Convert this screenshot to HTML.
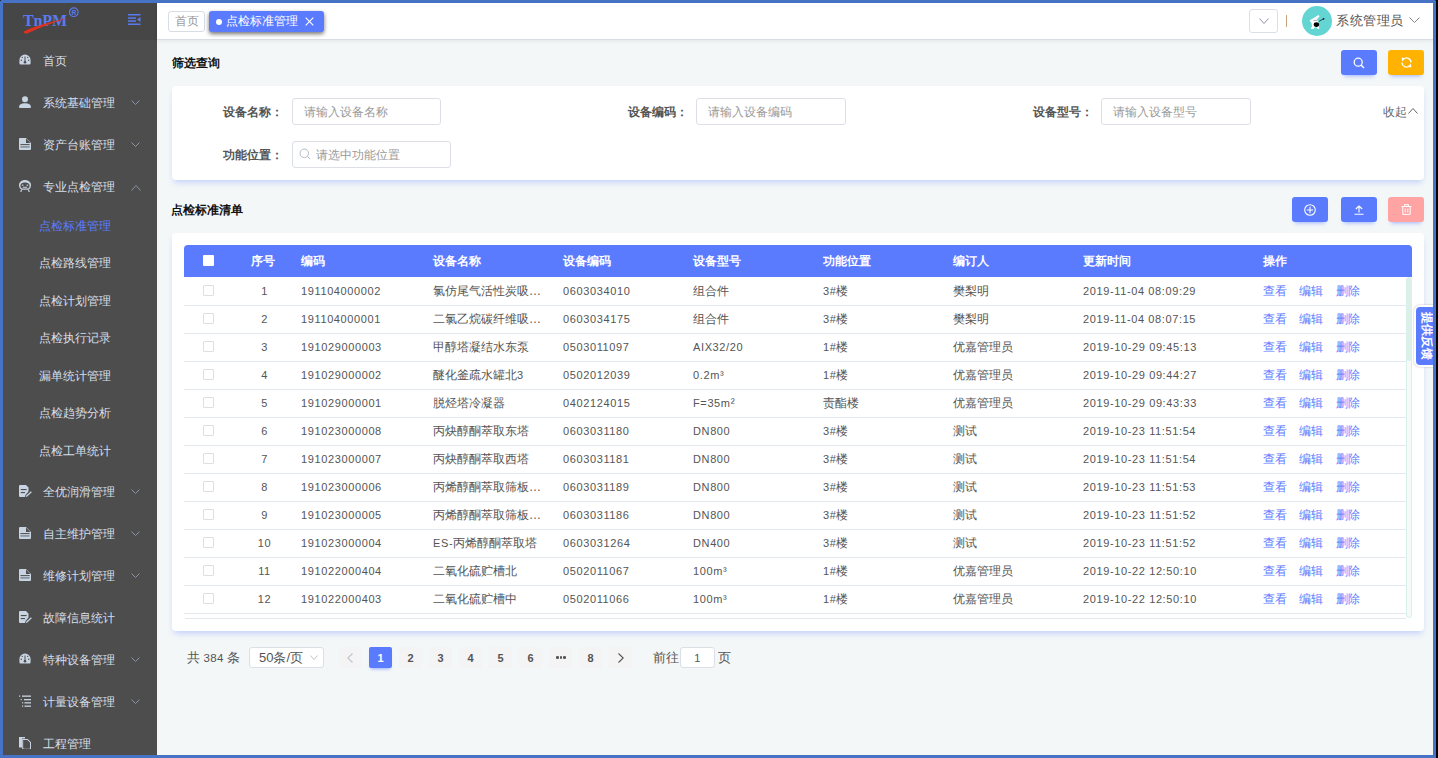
<!DOCTYPE html>
<html><head><meta charset="utf-8"><style>
*{box-sizing:border-box;margin:0;padding:0}
html,body{width:1438px;height:758px;overflow:hidden;background:#000}
body{position:relative;font-family:"Liberation Sans",sans-serif;font-size:12px;color:#606266}
.abs{position:absolute}
.mt{font-size:12px;line-height:20px;color:#d6dfea;white-space:nowrap}
.tag1{border:1px solid #d8dce5;border-radius:3px;background:#fff;color:#999;font-size:12px;line-height:19px;text-align:center}
.tag2{background:#5b7bff;border-radius:3px;color:#fff;font-size:12px;line-height:21px;box-shadow:0 2px 4px rgba(0,0,0,0.55)}
.tag2 .dot{position:absolute;left:7px;top:8px;width:6px;height:6px;border-radius:50%;background:#fff}
.tag2 .tt{position:absolute;left:17px;top:0}
.ttl{font-size:12px;font-weight:bold;color:#111;line-height:20px}
.btn{width:36px;height:25px;border-radius:3px;display:flex;align-items:center;justify-content:center;box-shadow:0 4px 4px -3px rgba(91,123,255,0.55)}
.card{background:#fff;border-radius:4px;box-shadow:0 4px 6px -2px rgba(91,123,255,0.34)}
.lbl{font-size:12px;font-weight:bold;color:#555;line-height:20px;white-space:nowrap}
.inp{border:1px solid #dcdfe6;border-radius:3px;background:#fff;color:#999;font-size:12px;line-height:27px;padding-left:11px;white-space:nowrap}
.th{color:#fff;font-weight:bold;font-size:12px;line-height:20px;white-space:nowrap}
.td{color:#555;font-size:12px;line-height:20px;white-space:nowrap}
.lk{color:#5b7bff}
.n{font-size:11px;letter-spacing:0.62px}
.cb{width:11px;height:11px;border:1px solid #dcdfe6;border-radius:1px;background:#fff}
.fb{background:#5b7bff;border:2px solid #fff;border-radius:6px;box-shadow:0 0 2px rgba(0,0,0,0.3)}
.fbt{position:absolute;left:-14px;top:22px;width:50px;height:14px;transform:rotate(90deg);color:#fff;font-weight:bold;font-size:12px;line-height:14px;white-space:nowrap;text-align:center}
.pg{color:#555;font-size:13px;line-height:21px;white-space:nowrap}
.pb{width:23px;height:21px;background:#f4f4f5;color:#555;font-weight:bold;font-size:11px;line-height:23px;text-align:center;border-radius:2px}
.pb.act{background:#5b7bff;color:#fff;box-shadow:0 3px 3px -2px rgba(91,123,255,0.6)}
</style></head><body>
<div class="abs" style="left:0;top:0;width:1436px;height:758px;background:#4673c6"></div>
<div class="abs" style="left:1436px;top:0;width:2px;height:758px;background:#000"></div>
<div class="abs" style="left:3px;top:3px;width:154px;height:752px;background:#4d4d4d"></div>
<div class="abs" style="left:3px;top:3px;width:154px;height:37px;background:#464646"></div>
<svg class="abs" style="left:20px;top:5px" width="64" height="30" viewBox="0 0 64 30">
<text x="3" y="21" font-family="Liberation Serif" font-weight="bold" font-size="16" fill="#5a7bf0" letter-spacing="-0.1">TnPM</text>
<path d="M4.2 26.3 C10 23.2 30 16.5 49.5 12.8 C31 18 16 24.5 7.5 28.3 C4.8 29.3 2.8 27.8 4.2 26.3Z" fill="#e0301e"/>
<circle cx="53.8" cy="7.2" r="4.3" fill="none" stroke="#5a7bf0" stroke-width="1.2"/>
<text x="53.8" y="9.6" font-family="Liberation Sans" font-weight="bold" font-size="6.5" fill="#5a7bf0" text-anchor="middle">R</text>
</svg>
<svg class="abs" style="left:128px;top:14px" width="13" height="11" viewBox="0 0 13 11">
<rect x="0" y="0" width="12.5" height="1.5" fill="#5a7bf0"/><rect x="0" y="3.3" width="8" height="1.5" fill="#5a7bf0"/>
<rect x="0" y="6.3" width="8" height="1.5" fill="#5a7bf0"/><rect x="0" y="9.5" width="12.5" height="1.5" fill="#5a7bf0"/>
<path d="M9 5.5 L12.5 3 L12.5 8Z" fill="#5a7bf0"/></svg>
<div class="abs mt" style="left:43px;top:50.5px">首页</div>
<svg class="abs" style="left:19px;top:54px" width="12" height="11" viewBox="0 0 12 11"><path d="M6 0.5 A5.6 5.6 0 0 0 0.4 6.1 L0.4 9.3 Q0.4 10.5 1.6 10.5 L10.4 10.5 Q11.6 10.5 11.6 9.3 L11.6 6.1 A5.6 5.6 0 0 0 6 0.5Z" fill="#c9d4e2"/><circle cx="6" cy="8.3" r="1.3" fill="#4d4d4d"/><path d="M6 8 L6 2.5" stroke="#4d4d4d" stroke-width="1"/><circle cx="2.3" cy="6.3" r="0.7" fill="#4d4d4d"/><circle cx="9.7" cy="6.3" r="0.7" fill="#4d4d4d"/><circle cx="3.3" cy="3.4" r="0.6" fill="#4d4d4d"/><circle cx="8.7" cy="3.4" r="0.6" fill="#4d4d4d"/></svg>
<div class="abs mt" style="left:43px;top:92.5px">系统基础管理</div>
<svg class="abs" style="left:19px;top:96px" width="12" height="12" viewBox="0 0 12 12"><circle cx="6" cy="3.2" r="3" fill="#c9d4e2"/><path d="M0 11 Q0 7.2 6 7.2 Q12 7.2 12 11 Q12 12 11 12 L1 12 Q0 12 0 11Z" fill="#c9d4e2"/></svg>
<svg class="abs" style="left:131px;top:100px" width="9" height="5" viewBox="0 0 9 5"><path d="M0.5 0.5 L4.5 4.5 L8.5 0.5" fill="none" stroke="#8a95a3" stroke-width="1"/></svg>
<div class="abs mt" style="left:43px;top:134.5px">资产台账管理</div>
<svg class="abs" style="left:19px;top:138px" width="12" height="12" viewBox="0 0 12 12"><path d="M1 0 L7 0 L12 5 L12 11 Q12 12 11 12 L1 12 Q0 12 0 11 L0 1 Q0 0 1 0Z" fill="#c9d4e2"/><path d="M7 0.6 L7 5 L11.4 5Z" fill="#4d4d4d"/><rect x="1.4" y="6.1" width="9.2" height="1" fill="#4d4d4d"/><rect x="1.4" y="8" width="9.2" height="1.8" fill="#8e96a0"/></svg>
<svg class="abs" style="left:131px;top:142px" width="9" height="5" viewBox="0 0 9 5"><path d="M0.5 0.5 L4.5 4.5 L8.5 0.5" fill="none" stroke="#8a95a3" stroke-width="1"/></svg>
<div class="abs mt" style="left:43px;top:176.5px">专业点检管理</div>
<svg class="abs" style="left:19px;top:180px" width="12" height="12" viewBox="0 0 12 12"><path d="M6 0 C9.4 0 12 2.2 12 5.2 C12 7.6 10.6 9.2 9 9.8 L3 9.8 C1.4 9.2 0 7.6 0 5.2 C0 2.2 2.6 0 6 0Z" fill="#c9d4e2"/><path d="M6 2.6 C8.6 2.6 10.6 3.8 10.6 5.8 C10.6 7.4 9.6 8.6 8.4 8.6 L3.6 8.6 C2.4 8.6 1.4 7.4 1.4 5.8 C1.4 3.8 3.4 2.6 6 2.6Z" fill="#4d4d4d"/><rect x="2.8" y="4.6" width="1.6" height="1.2" fill="#c9d4e2"/><rect x="7.6" y="4.6" width="1.6" height="1.2" fill="#c9d4e2"/><rect x="3.8" y="6.8" width="4.4" height="1" fill="#c9d4e2"/><path d="M2.6 9.6 L1.8 12 M9.4 9.6 L10.2 12" stroke="#c9d4e2" stroke-width="1.2"/></svg>
<svg class="abs" style="left:131px;top:185px" width="10" height="6" viewBox="0 0 10 6"><path d="M0.5 5.5 L5.0 0.5 L9.5 5.5" fill="none" stroke="#8a95a3" stroke-width="1"/></svg>
<div class="abs mt" style="left:39px;top:215.5px;color:#5b7cff">点检标准管理</div>
<div class="abs mt" style="left:39px;top:253.0px;color:#d6dfea">点检路线管理</div>
<div class="abs mt" style="left:39px;top:290.5px;color:#d6dfea">点检计划管理</div>
<div class="abs mt" style="left:39px;top:328.0px;color:#d6dfea">点检执行记录</div>
<div class="abs mt" style="left:39px;top:365.5px;color:#d6dfea">漏单统计管理</div>
<div class="abs mt" style="left:39px;top:403.0px;color:#d6dfea">点检趋势分析</div>
<div class="abs mt" style="left:39px;top:440.5px;color:#d6dfea">点检工单统计</div>
<div class="abs mt" style="left:43px;top:482px">全优润滑管理</div>
<svg class="abs" style="left:19px;top:485px" width="13" height="12" viewBox="0 0 13 12"><path d="M1 0 L7 0 L9.5 2.5 L9.5 6.5 L6.5 10 L6 12 L1 12 Q0 12 0 11 L0 1 Q0 0 1 0Z" fill="#c9d4e2"/><rect x="1.8" y="4" width="5.8" height="1.1" fill="#4d4d4d"/><rect x="1.8" y="7" width="4.2" height="1.1" fill="#4d4d4d"/><path d="M7.2 11.6 L12.4 6.8" stroke="#c9d4e2" stroke-width="1.3"/></svg>
<svg class="abs" style="left:131px;top:489px" width="9" height="5" viewBox="0 0 9 5"><path d="M0.5 0.5 L4.5 4.5 L8.5 0.5" fill="none" stroke="#8a95a3" stroke-width="1"/></svg>
<div class="abs mt" style="left:43px;top:524px">自主维护管理</div>
<svg class="abs" style="left:19px;top:527px" width="12" height="12" viewBox="0 0 12 12"><path d="M1 0 L7 0 L12 5 L12 11 Q12 12 11 12 L1 12 Q0 12 0 11 L0 1 Q0 0 1 0Z" fill="#c9d4e2"/><path d="M7 0.6 L7 5 L11.4 5Z" fill="#4d4d4d"/><rect x="1.4" y="6.1" width="9.2" height="1" fill="#4d4d4d"/><rect x="1.4" y="8" width="9.2" height="1.8" fill="#8e96a0"/></svg>
<svg class="abs" style="left:131px;top:531px" width="9" height="5" viewBox="0 0 9 5"><path d="M0.5 0.5 L4.5 4.5 L8.5 0.5" fill="none" stroke="#8a95a3" stroke-width="1"/></svg>
<div class="abs mt" style="left:43px;top:566px">维修计划管理</div>
<svg class="abs" style="left:19px;top:569px" width="12" height="12" viewBox="0 0 12 12"><path d="M1 0 L7 0 L12 5 L12 11 Q12 12 11 12 L1 12 Q0 12 0 11 L0 1 Q0 0 1 0Z" fill="#c9d4e2"/><path d="M7 0.6 L7 5 L11.4 5Z" fill="#4d4d4d"/><rect x="1.4" y="6.1" width="9.2" height="1" fill="#4d4d4d"/><rect x="1.4" y="8" width="9.2" height="1.8" fill="#8e96a0"/></svg>
<svg class="abs" style="left:131px;top:573px" width="9" height="5" viewBox="0 0 9 5"><path d="M0.5 0.5 L4.5 4.5 L8.5 0.5" fill="none" stroke="#8a95a3" stroke-width="1"/></svg>
<div class="abs mt" style="left:43px;top:608px">故障信息统计</div>
<svg class="abs" style="left:19px;top:611px" width="13" height="12" viewBox="0 0 13 12"><path d="M1 0 L7 0 L9.5 2.5 L9.5 6.5 L6.5 10 L6 12 L1 12 Q0 12 0 11 L0 1 Q0 0 1 0Z" fill="#c9d4e2"/><rect x="1.8" y="4" width="5.8" height="1.1" fill="#4d4d4d"/><rect x="1.8" y="7" width="4.2" height="1.1" fill="#4d4d4d"/><path d="M7.2 11.6 L12.4 6.8" stroke="#c9d4e2" stroke-width="1.3"/></svg>
<div class="abs mt" style="left:43px;top:650px">特种设备管理</div>
<svg class="abs" style="left:19px;top:653px" width="12" height="11" viewBox="0 0 12 11"><path d="M6 0.5 A5.6 5.6 0 0 0 0.4 6.1 L0.4 9.3 Q0.4 10.5 1.6 10.5 L10.4 10.5 Q11.6 10.5 11.6 9.3 L11.6 6.1 A5.6 5.6 0 0 0 6 0.5Z" fill="#c9d4e2"/><circle cx="6" cy="8.3" r="1.3" fill="#4d4d4d"/><path d="M6 8 L6 2.5" stroke="#4d4d4d" stroke-width="1"/><circle cx="2.3" cy="6.3" r="0.7" fill="#4d4d4d"/><circle cx="9.7" cy="6.3" r="0.7" fill="#4d4d4d"/><circle cx="3.3" cy="3.4" r="0.6" fill="#4d4d4d"/><circle cx="8.7" cy="3.4" r="0.6" fill="#4d4d4d"/></svg>
<svg class="abs" style="left:131px;top:657px" width="9" height="5" viewBox="0 0 9 5"><path d="M0.5 0.5 L4.5 4.5 L8.5 0.5" fill="none" stroke="#8a95a3" stroke-width="1"/></svg>
<div class="abs mt" style="left:43px;top:692px">计量设备管理</div>
<svg class="abs" style="left:19px;top:695px" width="12" height="12" viewBox="0 0 12 12"><rect x="0" y="0.5" width="1.2" height="1.2" fill="#c9d4e2"/><rect x="3" y="0.5" width="9" height="1.3" fill="#c9d4e2"/><rect x="1.6" y="4" width="1.2" height="1.2" fill="#c9d4e2"/><rect x="5" y="4" width="7" height="1.3" fill="#c9d4e2"/><rect x="3" y="7.2" width="1.2" height="1.2" fill="#c9d4e2"/><rect x="5.5" y="7.2" width="6.5" height="1.3" fill="#c9d4e2"/><rect x="3" y="10.5" width="1.2" height="1.2" fill="#c9d4e2"/><rect x="5.5" y="10.5" width="6.5" height="1.3" fill="#c9d4e2"/></svg>
<svg class="abs" style="left:131px;top:699px" width="9" height="5" viewBox="0 0 9 5"><path d="M0.5 0.5 L4.5 4.5 L8.5 0.5" fill="none" stroke="#8a95a3" stroke-width="1"/></svg>
<div class="abs mt" style="left:43px;top:734px">工程管理</div>
<svg class="abs" style="left:19px;top:737px" width="12" height="12" viewBox="0 0 12 12"><path d="M0 0 L6 0 L6 1.5 L3 1.5 L3 10.5 L0 10.5Z" fill="#c9d4e2"/><path d="M3.8 2.5 L8.5 2.5 L11.5 5.5 L11.5 12 L3.8 12Z" fill="none" stroke="#c9d4e2" stroke-width="1.2"/><path d="M4.4 3.1 L8.2 3.1 L10.9 5.8 L10.9 11.4 L4.4 11.4Z" fill="#4d4d4d"/></svg>
<div class="abs" style="left:157px;top:3px;width:1276px;height:752px;background:#f3f7f8"></div>
<div class="abs" style="left:157px;top:3px;width:1276px;height:37px;background:#fff;border-bottom:1px solid #d8dce5;box-shadow:0 1px 4px rgba(0,21,41,0.08)"></div>
<div class="abs tag1" style="left:168px;top:11px;width:37px;height:21px">首页</div>
<div class="abs tag2" style="left:209px;top:11px;width:115px;height:21px"><span class="dot"></span><span class="tt">点检标准管理</span>
<svg class="abs" style="left:96px;top:6px" width="9" height="9" viewBox="0 0 9 9"><path d="M0.7 0.7 L8.3 8.3 M8.3 0.7 L0.7 8.3" stroke="#fff" stroke-width="1.1"/></svg></div>
<div class="abs" style="left:1249px;top:9px;width:29px;height:24px;border:1px solid #dcdfe6;border-radius:3px;background:#fff"></div>
<svg class="abs" style="left:1259px;top:18px" width="10" height="6" viewBox="0 0 10 6"><path d="M0.5 0.5 L5.0 5.5 L9.5 0.5" fill="none" stroke="#8a95a3" stroke-width="1"/></svg>
<div class="abs" style="left:1286px;top:15px;width:1px;height:12px;background:#c8a27a"></div>
<svg class="abs" style="left:1302px;top:6px" width="30" height="30" viewBox="0 0 30 30"><circle cx="15" cy="15" r="15" fill="#63d6d3"/>
<path d="M7.5 14.5 L16.5 9 L17.5 10.5 L15 13 L16 15.5 L17 21 L17.3 23 L15.5 23 L15 21.5 L12.5 21.5 L11.5 23 L8.5 23 L10 20.5 L9.5 17 Z" fill="#fff"/>
<ellipse cx="14.4" cy="18.6" rx="2.7" ry="2.4" fill="#000"/><path d="M11.5 14.6 L15.5 14.2" stroke="#aaa" stroke-width="1"/><path d="M17 15.4 L21.8 12.6" stroke="#333" stroke-width="0.9"/><circle cx="21.6" cy="12.8" r="0.9" fill="#222"/></svg>
<div class="abs" style="left:1336px;top:10px;font-size:13px;letter-spacing:0.6px;line-height:21px;color:#555">系统管理员</div>
<svg class="abs" style="left:1409px;top:17px" width="11" height="6" viewBox="0 0 11 6"><path d="M0.5 0.5 L5.5 5.5 L10.5 0.5" fill="none" stroke="#888" stroke-width="1"/></svg>
<div class="abs ttl" style="left:172px;top:53px">筛选查询</div>
<div class="abs btn" style="left:1341px;top:50px;background:#5b7bff"><svg width="12" height="12" viewBox="0 0 12 12"><circle cx="5.2" cy="5.2" r="4" fill="none" stroke="#fff" stroke-width="1.3"/><path d="M8 8 L11 11" stroke="#fff" stroke-width="1.4"/></svg></div>
<div class="abs btn" style="left:1388px;top:50px;background:#ffb300"><svg width="11" height="11" viewBox="0 0 11 11"><path d="M10 5.6 A4.5 4.5 0 0 0 2.3 2.3" fill="none" stroke="#fff" stroke-width="1.2"/><path d="M0.6 0.6 L4.2 1.2 L1.2 4.4Z" fill="#fff"/><path d="M1 5.4 A4.5 4.5 0 0 0 8.7 8.7" fill="none" stroke="#fff" stroke-width="1.2"/><path d="M10.4 10.4 L6.8 9.8 L9.8 6.6Z" fill="#fff"/></svg></div>
<div class="abs card" style="left:172px;top:86px;width:1252px;height:94px"></div>
<div class="abs lbl" style="left:223px;top:102px">设备名称：</div>
<div class="abs inp" style="left:292px;top:98px;width:149px;height:27px">请输入设备名称</div>
<div class="abs lbl" style="left:628px;top:102px">设备编码：</div>
<div class="abs inp" style="left:696px;top:98px;width:150px;height:27px">请输入设备编码</div>
<div class="abs lbl" style="left:1033px;top:102px">设备型号：</div>
<div class="abs inp" style="left:1101px;top:98px;width:150px;height:27px">请输入设备型号</div>
<div class="abs" style="left:1383px;top:102px;line-height:20px;color:#666">收起</div>
<svg class="abs" style="left:1408px;top:108px" width="10" height="6" viewBox="0 0 10 6"><path d="M0.5 5.5 L5.0 0.5 L9.5 5.5" fill="none" stroke="#666" stroke-width="1"/></svg>
<div class="abs lbl" style="left:223px;top:145px">功能位置：</div>
<div class="abs inp" style="left:292px;top:141px;width:159px;height:27px;padding-left:23px">请选中功能位置</div>
<svg class="abs" style="left:299px;top:148px" width="12" height="12" viewBox="0 0 12 12"><circle cx="5.3" cy="5.3" r="4.3" fill="none" stroke="#b8bcc4" stroke-width="1"/><path d="M8.4 8.4 L11 11" stroke="#b8bcc4" stroke-width="1"/></svg>
<div class="abs ttl" style="left:171px;top:200px">点检标准清单</div>
<div class="abs btn" style="left:1292px;top:197px;background:#5b7bff"><svg width="12" height="12" viewBox="0 0 12 12"><circle cx="6" cy="6" r="5.3" fill="none" stroke="#fff" stroke-width="1.1"/><path d="M6 2.8 L6 9.2 M2.8 6 L9.2 6" stroke="#fff" stroke-width="1.1"/></svg></div>
<div class="abs btn" style="left:1341px;top:197px;background:#5b7bff"><svg width="10" height="10" viewBox="0 0 10 10"><path d="M5 1 L5 7.5 M1.8 4 L5 1 L8.2 4 M0.5 9.2 L9.5 9.2" fill="none" stroke="#fff" stroke-width="1.1"/></svg></div>
<div class="abs btn" style="left:1388px;top:197px;background:#ffa3a3"><svg width="11" height="11" viewBox="0 0 11 11"><path d="M0.5 2.5 L10.5 2.5 M3.5 2.5 L3.5 0.7 L7.5 0.7 L7.5 2.5 M1.8 2.5 L1.8 10.4 L9.2 10.4 L9.2 2.5 M4.2 4.5 L4.2 8.5 M6.8 4.5 L6.8 8.5" fill="none" stroke="#fff" stroke-width="1"/></svg></div>
<div class="abs card" style="left:172px;top:233px;width:1252px;height:398px"></div>
<div class="abs" style="left:184px;top:245px;width:1228px;height:32px;background:#5b7bff;border-radius:4px 4px 0 0"></div>
<div class="abs" style="left:203px;top:255px;width:11px;height:11px;background:#fff;border-radius:1px"></div>
<div class="abs th" style="left:251px;top:251px">序号</div>
<div class="abs th" style="left:301px;top:251px">编码</div>
<div class="abs th" style="left:433px;top:251px">设备名称</div>
<div class="abs th" style="left:563px;top:251px">设备编码</div>
<div class="abs th" style="left:693px;top:251px">设备型号</div>
<div class="abs th" style="left:823px;top:251px">功能位置</div>
<div class="abs th" style="left:953px;top:251px">编订人</div>
<div class="abs th" style="left:1083px;top:251px">更新时间</div>
<div class="abs th" style="left:1263px;top:251px">操作</div>
<div class="abs" style="left:184px;top:278px;width:1222px;height:341px;background:#fff;overflow:hidden">
<div class="abs" style="left:0;top:27px;width:1222px;height:1px;background:#e3e8ef"></div>
<div class="abs cb" style="left:19px;top:7px"></div>
<div class="abs td" style="left:52px;top:3px;width:57px;text-align:center"><span class="n">1</span></div>
<div class="abs td" style="left:117px;top:3px"><span class="n">191104000002</span></div>
<div class="abs td" style="left:249px;top:3px">氯仿尾气活性炭吸…</div>
<div class="abs td" style="left:379px;top:3px"><span class="n">0603034010</span></div>
<div class="abs td" style="left:509px;top:3px">组合件</div>
<div class="abs td" style="left:639px;top:3px"><span class="n">3#</span>楼</div>
<div class="abs td" style="left:769px;top:3px">樊梨明</div>
<div class="abs td" style="left:899px;top:3px"><span class="n">2019-11-04 08:09:29</span></div>
<div class="abs td lk" style="left:1079px;top:3px">查看</div>
<div class="abs td lk" style="left:1115px;top:3px">编辑</div>
<div class="abs td lk" style="left:1152px;top:3px">删除</div>
<div class="abs" style="left:0;top:55px;width:1222px;height:1px;background:#e3e8ef"></div>
<div class="abs cb" style="left:19px;top:35px"></div>
<div class="abs td" style="left:52px;top:31px;width:57px;text-align:center"><span class="n">2</span></div>
<div class="abs td" style="left:117px;top:31px"><span class="n">191104000001</span></div>
<div class="abs td" style="left:249px;top:31px">二氯乙烷碳纤维吸…</div>
<div class="abs td" style="left:379px;top:31px"><span class="n">0603034175</span></div>
<div class="abs td" style="left:509px;top:31px">组合件</div>
<div class="abs td" style="left:639px;top:31px"><span class="n">3#</span>楼</div>
<div class="abs td" style="left:769px;top:31px">樊梨明</div>
<div class="abs td" style="left:899px;top:31px"><span class="n">2019-11-04 08:07:15</span></div>
<div class="abs td lk" style="left:1079px;top:31px">查看</div>
<div class="abs td lk" style="left:1115px;top:31px">编辑</div>
<div class="abs td lk" style="left:1152px;top:31px">删除</div>
<div class="abs" style="left:0;top:83px;width:1222px;height:1px;background:#e3e8ef"></div>
<div class="abs cb" style="left:19px;top:63px"></div>
<div class="abs td" style="left:52px;top:59px;width:57px;text-align:center"><span class="n">3</span></div>
<div class="abs td" style="left:117px;top:59px"><span class="n">191029000003</span></div>
<div class="abs td" style="left:249px;top:59px">甲醇塔凝结水东泵</div>
<div class="abs td" style="left:379px;top:59px"><span class="n">0503011097</span></div>
<div class="abs td" style="left:509px;top:59px"><span class="n">AIX32/20</span></div>
<div class="abs td" style="left:639px;top:59px"><span class="n">1#</span>楼</div>
<div class="abs td" style="left:769px;top:59px">优嘉管理员</div>
<div class="abs td" style="left:899px;top:59px"><span class="n">2019-10-29 09:45:13</span></div>
<div class="abs td lk" style="left:1079px;top:59px">查看</div>
<div class="abs td lk" style="left:1115px;top:59px">编辑</div>
<div class="abs td lk" style="left:1152px;top:59px">删除</div>
<div class="abs" style="left:0;top:111px;width:1222px;height:1px;background:#e3e8ef"></div>
<div class="abs cb" style="left:19px;top:91px"></div>
<div class="abs td" style="left:52px;top:87px;width:57px;text-align:center"><span class="n">4</span></div>
<div class="abs td" style="left:117px;top:87px"><span class="n">191029000002</span></div>
<div class="abs td" style="left:249px;top:87px">醚化釜疏水罐北<span class="n">3</span></div>
<div class="abs td" style="left:379px;top:87px"><span class="n">0502012039</span></div>
<div class="abs td" style="left:509px;top:87px"><span class="n">0.2m³</span></div>
<div class="abs td" style="left:639px;top:87px"><span class="n">1#</span>楼</div>
<div class="abs td" style="left:769px;top:87px">优嘉管理员</div>
<div class="abs td" style="left:899px;top:87px"><span class="n">2019-10-29 09:44:27</span></div>
<div class="abs td lk" style="left:1079px;top:87px">查看</div>
<div class="abs td lk" style="left:1115px;top:87px">编辑</div>
<div class="abs td lk" style="left:1152px;top:87px">删除</div>
<div class="abs" style="left:0;top:139px;width:1222px;height:1px;background:#e3e8ef"></div>
<div class="abs cb" style="left:19px;top:119px"></div>
<div class="abs td" style="left:52px;top:115px;width:57px;text-align:center"><span class="n">5</span></div>
<div class="abs td" style="left:117px;top:115px"><span class="n">191029000001</span></div>
<div class="abs td" style="left:249px;top:115px">脱烃塔冷凝器</div>
<div class="abs td" style="left:379px;top:115px"><span class="n">0402124015</span></div>
<div class="abs td" style="left:509px;top:115px"><span class="n">F=35m</span>²</div>
<div class="abs td" style="left:639px;top:115px">责酯楼</div>
<div class="abs td" style="left:769px;top:115px">优嘉管理员</div>
<div class="abs td" style="left:899px;top:115px"><span class="n">2019-10-29 09:43:33</span></div>
<div class="abs td lk" style="left:1079px;top:115px">查看</div>
<div class="abs td lk" style="left:1115px;top:115px">编辑</div>
<div class="abs td lk" style="left:1152px;top:115px">删除</div>
<div class="abs" style="left:0;top:167px;width:1222px;height:1px;background:#e3e8ef"></div>
<div class="abs cb" style="left:19px;top:147px"></div>
<div class="abs td" style="left:52px;top:143px;width:57px;text-align:center"><span class="n">6</span></div>
<div class="abs td" style="left:117px;top:143px"><span class="n">191023000008</span></div>
<div class="abs td" style="left:249px;top:143px">丙炔醇酮萃取东塔</div>
<div class="abs td" style="left:379px;top:143px"><span class="n">0603031180</span></div>
<div class="abs td" style="left:509px;top:143px"><span class="n">DN800</span></div>
<div class="abs td" style="left:639px;top:143px"><span class="n">3#</span>楼</div>
<div class="abs td" style="left:769px;top:143px">测试</div>
<div class="abs td" style="left:899px;top:143px"><span class="n">2019-10-23 11:51:54</span></div>
<div class="abs td lk" style="left:1079px;top:143px">查看</div>
<div class="abs td lk" style="left:1115px;top:143px">编辑</div>
<div class="abs td lk" style="left:1152px;top:143px">删除</div>
<div class="abs" style="left:0;top:195px;width:1222px;height:1px;background:#e3e8ef"></div>
<div class="abs cb" style="left:19px;top:175px"></div>
<div class="abs td" style="left:52px;top:171px;width:57px;text-align:center"><span class="n">7</span></div>
<div class="abs td" style="left:117px;top:171px"><span class="n">191023000007</span></div>
<div class="abs td" style="left:249px;top:171px">丙炔醇酮萃取西塔</div>
<div class="abs td" style="left:379px;top:171px"><span class="n">0603031181</span></div>
<div class="abs td" style="left:509px;top:171px"><span class="n">DN800</span></div>
<div class="abs td" style="left:639px;top:171px"><span class="n">3#</span>楼</div>
<div class="abs td" style="left:769px;top:171px">测试</div>
<div class="abs td" style="left:899px;top:171px"><span class="n">2019-10-23 11:51:54</span></div>
<div class="abs td lk" style="left:1079px;top:171px">查看</div>
<div class="abs td lk" style="left:1115px;top:171px">编辑</div>
<div class="abs td lk" style="left:1152px;top:171px">删除</div>
<div class="abs" style="left:0;top:223px;width:1222px;height:1px;background:#e3e8ef"></div>
<div class="abs cb" style="left:19px;top:203px"></div>
<div class="abs td" style="left:52px;top:199px;width:57px;text-align:center"><span class="n">8</span></div>
<div class="abs td" style="left:117px;top:199px"><span class="n">191023000006</span></div>
<div class="abs td" style="left:249px;top:199px">丙烯醇酮萃取筛板…</div>
<div class="abs td" style="left:379px;top:199px"><span class="n">0603031189</span></div>
<div class="abs td" style="left:509px;top:199px"><span class="n">DN800</span></div>
<div class="abs td" style="left:639px;top:199px"><span class="n">3#</span>楼</div>
<div class="abs td" style="left:769px;top:199px">测试</div>
<div class="abs td" style="left:899px;top:199px"><span class="n">2019-10-23 11:51:53</span></div>
<div class="abs td lk" style="left:1079px;top:199px">查看</div>
<div class="abs td lk" style="left:1115px;top:199px">编辑</div>
<div class="abs td lk" style="left:1152px;top:199px">删除</div>
<div class="abs" style="left:0;top:251px;width:1222px;height:1px;background:#e3e8ef"></div>
<div class="abs cb" style="left:19px;top:231px"></div>
<div class="abs td" style="left:52px;top:227px;width:57px;text-align:center"><span class="n">9</span></div>
<div class="abs td" style="left:117px;top:227px"><span class="n">191023000005</span></div>
<div class="abs td" style="left:249px;top:227px">丙烯醇酮萃取筛板…</div>
<div class="abs td" style="left:379px;top:227px"><span class="n">0603031186</span></div>
<div class="abs td" style="left:509px;top:227px"><span class="n">DN800</span></div>
<div class="abs td" style="left:639px;top:227px"><span class="n">3#</span>楼</div>
<div class="abs td" style="left:769px;top:227px">测试</div>
<div class="abs td" style="left:899px;top:227px"><span class="n">2019-10-23 11:51:52</span></div>
<div class="abs td lk" style="left:1079px;top:227px">查看</div>
<div class="abs td lk" style="left:1115px;top:227px">编辑</div>
<div class="abs td lk" style="left:1152px;top:227px">删除</div>
<div class="abs" style="left:0;top:279px;width:1222px;height:1px;background:#e3e8ef"></div>
<div class="abs cb" style="left:19px;top:259px"></div>
<div class="abs td" style="left:52px;top:255px;width:57px;text-align:center"><span class="n">10</span></div>
<div class="abs td" style="left:117px;top:255px"><span class="n">191023000004</span></div>
<div class="abs td" style="left:249px;top:255px"><span class="n">ES-</span>丙烯醇酮萃取塔</div>
<div class="abs td" style="left:379px;top:255px"><span class="n">0603031264</span></div>
<div class="abs td" style="left:509px;top:255px"><span class="n">DN400</span></div>
<div class="abs td" style="left:639px;top:255px"><span class="n">3#</span>楼</div>
<div class="abs td" style="left:769px;top:255px">测试</div>
<div class="abs td" style="left:899px;top:255px"><span class="n">2019-10-23 11:51:52</span></div>
<div class="abs td lk" style="left:1079px;top:255px">查看</div>
<div class="abs td lk" style="left:1115px;top:255px">编辑</div>
<div class="abs td lk" style="left:1152px;top:255px">删除</div>
<div class="abs" style="left:0;top:307px;width:1222px;height:1px;background:#e3e8ef"></div>
<div class="abs cb" style="left:19px;top:287px"></div>
<div class="abs td" style="left:52px;top:283px;width:57px;text-align:center"><span class="n">11</span></div>
<div class="abs td" style="left:117px;top:283px"><span class="n">191022000404</span></div>
<div class="abs td" style="left:249px;top:283px">二氧化硫贮槽北</div>
<div class="abs td" style="left:379px;top:283px"><span class="n">0502011067</span></div>
<div class="abs td" style="left:509px;top:283px"><span class="n">100m³</span></div>
<div class="abs td" style="left:639px;top:283px"><span class="n">1#</span>楼</div>
<div class="abs td" style="left:769px;top:283px">优嘉管理员</div>
<div class="abs td" style="left:899px;top:283px"><span class="n">2019-10-22 12:50:10</span></div>
<div class="abs td lk" style="left:1079px;top:283px">查看</div>
<div class="abs td lk" style="left:1115px;top:283px">编辑</div>
<div class="abs td lk" style="left:1152px;top:283px">删除</div>
<div class="abs" style="left:0;top:335px;width:1222px;height:1px;background:#e3e8ef"></div>
<div class="abs cb" style="left:19px;top:315px"></div>
<div class="abs td" style="left:52px;top:311px;width:57px;text-align:center"><span class="n">12</span></div>
<div class="abs td" style="left:117px;top:311px"><span class="n">191022000403</span></div>
<div class="abs td" style="left:249px;top:311px">二氧化硫贮槽中</div>
<div class="abs td" style="left:379px;top:311px"><span class="n">0502011066</span></div>
<div class="abs td" style="left:509px;top:311px"><span class="n">100m³</span></div>
<div class="abs td" style="left:639px;top:311px"><span class="n">1#</span>楼</div>
<div class="abs td" style="left:769px;top:311px">优嘉管理员</div>
<div class="abs td" style="left:899px;top:311px"><span class="n">2019-10-22 12:50:10</span></div>
<div class="abs td lk" style="left:1079px;top:311px">查看</div>
<div class="abs td lk" style="left:1115px;top:311px">编辑</div>
<div class="abs td lk" style="left:1152px;top:311px">删除</div>
<div class="abs" style="left:1px;top:340px;width:1221px;height:1px;background:#e3e8ef"></div>
</div>
<div class="abs" style="left:1406px;top:277px;width:6px;height:341px;background:#f6fbfa;border:1px solid #d9efe9;border-radius:3px"></div>
<div class="abs" style="left:1406px;top:278px;width:6px;height:83px;background:#dcf0ea;border-radius:3px"></div>
<div class="abs fb" style="left:1414px;top:305px;width:26px;height:62px"><div class="fbt">提供反馈</div></div>
<div class="abs" style="left:1436px;top:0;width:2px;height:758px;background:#000"></div>
<div class="abs" style="left:1400px;top:0;width:36px;height:3px;background:#000"></div>
<div class="abs" style="left:1380px;top:0;width:56px;height:758px;border-top:3px solid #4673c6;border-right:3px solid #4673c6;border-top-right-radius:2px"></div>
<div class="abs" style="left:0;top:0;width:1px;height:1px;background:#222"></div>
<div class="abs pg" style="left:187px;top:647px">共<span style="font-size:11.5px;letter-spacing:0.3px"> 384 </span>条</div>
<div class="abs" style="left:249px;top:647px;width:75px;height:21px;border:1px solid #dcdfe6;border-radius:3px;background:#fff"></div>
<div class="abs pg" style="left:259px;top:647px;font-size:13px">50条/页</div>
<svg class="abs" style="left:310px;top:655px" width="8" height="5" viewBox="0 0 8 5"><path d="M0.5 0.5 L4.0 4.5 L7.5 0.5" fill="none" stroke="#c0c4cc" stroke-width="1"/></svg>
<div class="abs pb" style="left:339px;top:647px"></div>
<svg class="abs" style="left:347px;top:653px" width="6" height="10" viewBox="0 0 6 10"><path d="M5.5 0.5 L0.8 5 L5.5 9.5" fill="none" stroke="#c0c4cc" stroke-width="1.1"/></svg>
<div class="abs pb act" style="left:369px;top:647px">1</div>
<div class="abs pb" style="left:399px;top:647px">2</div>
<div class="abs pb" style="left:429px;top:647px">3</div>
<div class="abs pb" style="left:459px;top:647px">4</div>
<div class="abs pb" style="left:489px;top:647px">5</div>
<div class="abs pb" style="left:519px;top:647px">6</div>
<div class="abs pb" style="left:549px;top:647px"></div>
<div class="abs" style="left:556.0px;top:656px;width:2.5px;height:2.5px;border-radius:50%;background:#555"></div>
<div class="abs" style="left:559.5px;top:656px;width:2.5px;height:2.5px;border-radius:50%;background:#555"></div>
<div class="abs" style="left:563.0px;top:656px;width:2.5px;height:2.5px;border-radius:50%;background:#555"></div>
<div class="abs pb" style="left:579px;top:647px">8</div>
<div class="abs pb" style="left:609px;top:647px"></div>
<svg class="abs" style="left:618px;top:653px" width="6" height="10" viewBox="0 0 6 10"><path d="M0.5 0.5 L5.2 5 L0.5 9.5" fill="none" stroke="#555" stroke-width="1.1"/></svg>
<div class="abs pg" style="left:653px;top:647px">前往</div>
<div class="abs" style="left:680px;top:647px;width:35px;height:21px;border:1px solid #dcdfe6;border-radius:3px;background:#fff;text-align:center;line-height:20px;color:#555"><span class="n">1</span></div>
<div class="abs pg" style="left:718px;top:647px">页</div>
</body></html>
